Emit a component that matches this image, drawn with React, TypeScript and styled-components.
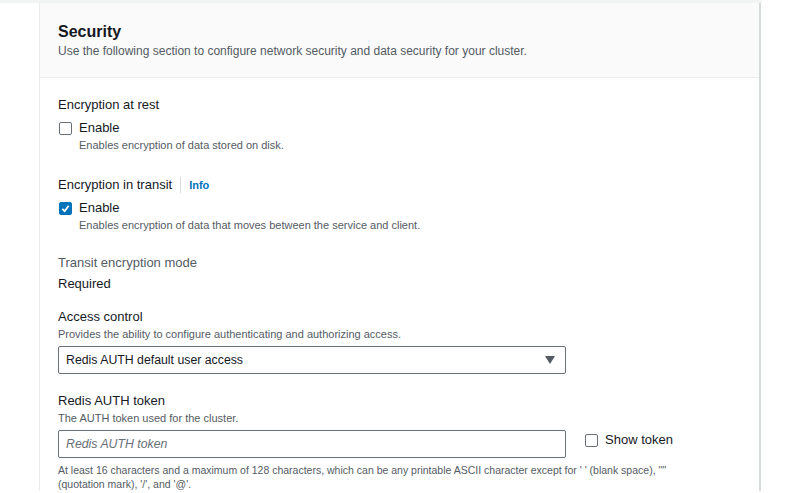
import React from 'react';
import styled, { createGlobalStyle } from 'styled-components';

const GlobalStyle = createGlobalStyle`
  html, body {
    margin: 0;
    padding: 0;
    background: #ffffff;
    font-family: "Liberation Sans", Arial, sans-serif;
    color: #16191f;
  }
`;

const Page = styled.div`
  width: 762px;
  border-top: 3px solid #f2f3f3;
`;

const Container = styled.section`
  margin-left: 39px;
  width: 719px;
  border-left: 1px solid #eaeded;
  border-right: 2px solid #d5dbdb;
  background: #ffffff;
`;

const Header = styled.header`
  background: #fafafa;
  border-bottom: 1px solid #eaeded;
  padding: 19px 18px 18px 18px;
`;

const Title = styled.h2`
  margin: 0;
  font-size: 16px;
  line-height: 20px;
  font-weight: 700;
  color: #16191f;
`;

const HeaderText = styled.p`
  margin: 1px 0 0;
  font-size: 12px;
  line-height: 16px;
  color: #545b64;
`;

const Description = styled.p`
  margin: 0;
  font-size: 11px;
  line-height: 16px;
  color: #545b64;
`;

const Body = styled.div`
  padding: 18px 18px 0 18px;
  display: flex;
  flex-direction: column;
`;

const Field = styled.div<{ $gap?: number }>`
  display: flex;
  flex-direction: column;
  margin-bottom: ${p => p.$gap ?? 20}px;
`;

const LabelRow = styled.div`
  display: flex;
  align-items: center;
`;

const Label = styled.div<{ $muted?: boolean }>`
  font-size: 13px;
  line-height: 18px;
  color: ${p => (p.$muted ? '#545b64' : '#16191f')};
`;

const InfoLink = styled.span`
  margin-left: 8px;
  padding-left: 8px;
  border-left: 1px solid #d5dbdb;
  font-size: 11px;
  line-height: 16px;
  font-weight: 700;
  color: #0073bb;
`;

const CheckRow = styled.label`
  display: flex;
  align-items: flex-start;
  gap: 7px;
  margin-top: 5px;
`;

const Box = styled.span<{ $checked?: boolean }>`
  flex: none;
  width: 11px;
  height: 11px;
  margin-top: 3px;
  margin-left: 1px;
  border: 1px solid ${p => (p.$checked ? '#0073bb' : '#687078')};
  border-radius: 2px;
  background: ${p => (p.$checked ? '#0073bb' : '#ffffff')};
  display: flex;
  align-items: center;
  justify-content: center;
`;

const CheckText = styled.div`
  display: flex;
  flex-direction: column;
`;

const CheckLabel = styled.span`
  font-size: 13px;
  line-height: 18px;
  color: #16191f;
`;

const Value = styled.div`
  margin-top: 3px;
  font-size: 13px;
  line-height: 18px;
  color: #16191f;
`;

const Control = styled.div`
  margin-top: 4px;
  width: 508px;
  height: 28px;
  box-sizing: border-box;
  border: 1px solid #687078;
  border-radius: 2px;
  display: flex;
  align-items: center;
  padding: 0 10px 0 7px;
  font-size: 12.3px;
  color: #16191f;
`;

const SelectText = styled.span`
  flex: 1;
`;

const Placeholder = styled.span`
  font-style: italic;
  color: #687078;
`;

const InputRow = styled.div`
  display: flex;
  align-items: flex-start;
  gap: 18px;
`;

const Hint = styled.p`
  margin: 5px 0 0;
  font-size: 10.5px;
  line-height: 14px;
  color: #545b64;
`;

const Check = ({ checked }: { checked?: boolean }) => (
  <Box $checked={checked}>
    {checked && (
      <svg width="9" height="9" viewBox="0 0 10 10">
        <polyline points="1.5,5.5 4,8 8.5,2" fill="none" stroke="#fff" strokeWidth="2" />
      </svg>
    )}
  </Box>
);

export default function App() {
  return (
    <>
      <GlobalStyle />
      <Page>
        <Container>
          <Header>
            <Title>Security</Title>
            <HeaderText>
              Use the following section to configure network security and data security for your cluster.
            </HeaderText>
          </Header>
          <Body>
            <Field $gap={23}>
              <Label>Encryption at rest</Label>
              <CheckRow>
                <Check />
                <CheckText>
                  <CheckLabel>Enable</CheckLabel>
                  <Description>Enables encryption of data stored on disk.</Description>
                </CheckText>
              </CheckRow>
            </Field>

            <Field $gap={21}>
              <LabelRow>
                <Label>Encryption in transit</Label>
                <InfoLink>Info</InfoLink>
              </LabelRow>
              <CheckRow>
                <Check checked />
                <CheckText>
                  <CheckLabel>Enable</CheckLabel>
                  <Description>Enables encryption of data that moves between the service and client.</Description>
                </CheckText>
              </CheckRow>
            </Field>

            <Field $gap={15}>
              <Label $muted>Transit encryption mode</Label>
              <Value>Required</Value>
            </Field>

            <Field $gap={18}>
              <Label>Access control</Label>
              <Description>Provides the ability to configure authenticating and authorizing access.</Description>
              <Control>
                <SelectText>Redis AUTH default user access</SelectText>
                <svg width="10" height="8" viewBox="0 0 10 8">
                  <polygon points="0,0 10,0 5,8" fill="#545b64" />
                </svg>
              </Control>
            </Field>

            <Field $gap={0}>
              <Label>Redis AUTH token</Label>
              <Description>The AUTH token used for the cluster.</Description>
              <InputRow>
                <Control>
                  <Placeholder>Redis AUTH token</Placeholder>
                </Control>
                <CheckRow>
                  <Check />
                  <CheckLabel>Show token</CheckLabel>
                </CheckRow>
              </InputRow>
              <Hint>
                At least 16 characters and a maximum of 128 characters, which can be any printable ASCII character except for ' ' (blank space), '"'
                <br />
                (quotation mark), '/', and '@'.
              </Hint>
            </Field>
          </Body>
        </Container>
      </Page>
    </>
  );
}
